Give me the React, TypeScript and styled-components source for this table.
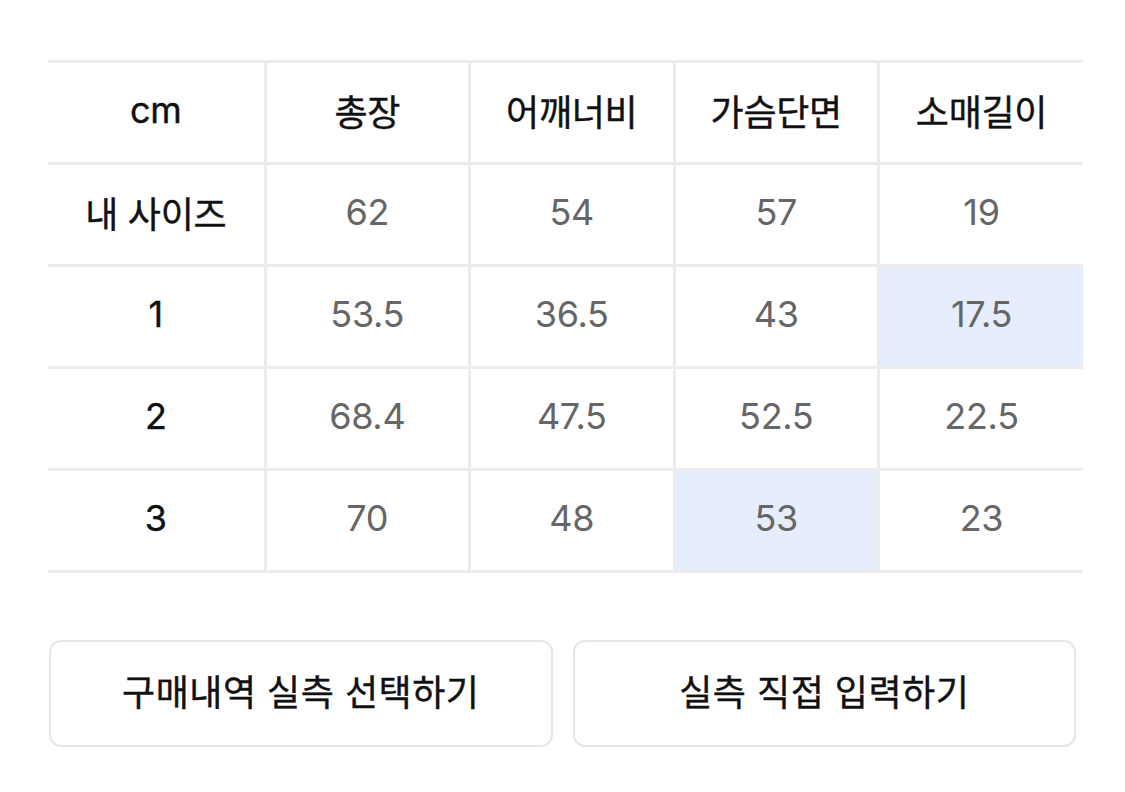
import React, { FC } from "react";
import styled, { createGlobalStyle, css } from "styled-components";

const GlobalStyle = createGlobalStyle`
    html, body {
        margin: 0;
        background: #ffffff;
        font-family: "Inter", "Noto Sans CJK KR", sans-serif;
    }
`;

const Page = styled.div`
    width: 1125px;
    padding: 60px 42px 0 48px;
    box-sizing: border-box;
`;

const Table = styled.table`
    width: 1035px;
    border-collapse: collapse;
    table-layout: fixed;
`;

const Cell = styled.td<{ $head?: boolean; $hl?: boolean }>`
    height: 93px;
    padding: 0 0 6px;
    text-align: center;
    vertical-align: middle;
    font-size: 36px;
    color: #666666;
    border-top: 3px solid #ececec;
    border-bottom: 3px solid #ececec;
    border-left: 3px solid #ececec;
    letter-spacing: -0.3px;

    &:first-child {
        border-left: none;
    }

    ${({ $head }) => $head && css`
        color: #111111;
        font-weight: 400;
        -webkit-text-stroke: 0.4px #111111;
    `}

    ${({ $hl }) => $hl && css`
        background: #e6edfb;
    `}
`;

const Buttons = styled.div`
    display: flex;
    gap: 20px;
    margin: 67px 7px 0 1px;
`;

const Button = styled.button`
    flex: 1;
    height: 107px;
    padding: 0 0 8px;
    border: 2px solid #e6e6e6;
    border-radius: 12px;
    background: #ffffff;
    font-family: "Inter", "Noto Sans CJK KR", sans-serif;
    font-size: 36px;
    font-weight: 400;
    -webkit-text-stroke: 0.4px #111111;
    color: #111111;
    letter-spacing: 0.5px;
    cursor: pointer;
`;

type Row = {
    label: string
    values: string[]
    highlight?: number
}

const headers = ["총장", "어깨너비", "가슴단면", "소매길이"];

const rows: Row[] = [
    { label: "내 사이즈", values: ["62", "54", "57", "19"] },
    { label: "1", values: ["53.5", "36.5", "43", "17.5"], highlight: 3 },
    { label: "2", values: ["68.4", "47.5", "52.5", "22.5"] },
    { label: "3", values: ["70", "48", "53", "23"], highlight: 2 },
];

const App: FC = () => (
    <>
        <GlobalStyle />
        <Page>
            <Table>
                <colgroup>
                    <col style={{ width: 217 }} />
                    <col />
                    <col />
                    <col />
                    <col />
                </colgroup>
                <tbody>
                    <tr>
                        <Cell $head>cm</Cell>
                        {headers.map(h => <Cell $head key={h}>{h}</Cell>)}
                    </tr>
                    {rows.map(row => (
                        <tr key={row.label}>
                            <Cell $head>{row.label}</Cell>
                            {row.values.map((v, i) => (
                                <Cell key={i} $hl={row.highlight === i}>{v}</Cell>
                            ))}
                        </tr>
                    ))}
                </tbody>
            </Table>
            <Buttons>
                <Button>구매내역 실측 선택하기</Button>
                <Button>실측 직접 입력하기</Button>
            </Buttons>
        </Page>
    </>
);

export default App;
